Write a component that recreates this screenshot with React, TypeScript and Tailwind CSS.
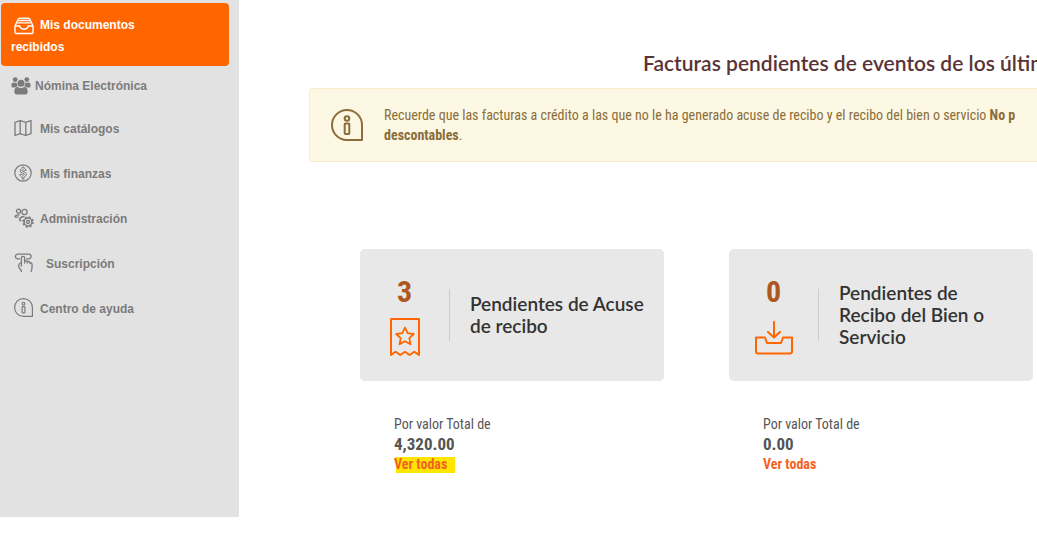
import type { ReactNode } from 'react';

const DocumentsIcon = () => (
  <svg width="20" height="18" viewBox="0 0 20 18" fill="none" stroke="currentColor" strokeWidth="1.4" strokeLinejoin="round">
    <path d="M5 1.2h10M4.2 3.5h11.6M3.2 5.9h13.6" />
    <path d="M4.6 1.2 1 9v6.2c0 .8.5 1.3 1.3 1.3h15.4c.8 0 1.3-.5 1.3-1.3V9l-3.6-7.8" />
    <path d="M1 9h4.8c.4 2 2 3.2 4.2 3.2s3.8-1.2 4.2-3.2H19" />
  </svg>
);

const GroupIcon = () => (
  <svg width="20" height="18" viewBox="0 0 20 18" fill="currentColor">
    <circle cx="4.2" cy="2.6" r="2.4" />
    <circle cx="15.8" cy="2.6" r="2.4" />
    <circle cx="10" cy="6.200" r="3.500" />
    <path d="M.5 9.500V7.600C.5 6.200 1.400 5.400 2.500 5.400c1 .6 2.300.6 3.200.1 0 1.600.4 2.700 1.200 3.700-1.300.1-2.200.6-2.900 1.400H1.800C1 10.600.5 10.200.5 9.500zM19.500 9.500V7.600c0-1.400-.9-2.200-2-2.200-1 .6-2.300.6-3.200.1 0 1.600-.4 2.700-1.200 3.700 1.300.1 2.200.6 2.900 1.400h2.200c.8 0 1.300-.4 1.300-1.100z" />
    <path d="M3.300 15c0-2.900.9-4.900 3.300-4.900 2 1.500 4.800 1.500 6.800 0 2.400 0 3.300 2 3.300 4.900 0 1.500-1 2.400-2.400 2.400H5.700c-1.400 0-2.400-.9-2.400-2.400z" />
  </svg>
);

const MapIcon = () => (
  <svg width="18" height="18" viewBox="0 0 18 18" fill="none" stroke="currentColor" strokeWidth="1.3" strokeLinejoin="round">
    <path d="M1 3.3 6.2 1.5l5.6 1.800L17 1.500v13.200l-5.200 1.800-5.600-1.800L1 16.500zM6.200 1.500v13.200M11.800 3.300v13.200" />
  </svg>
);

const MoneyIcon = () => (
  <svg width="18" height="18" viewBox="0 0 18 18" fill="none" stroke="currentColor" strokeLinejoin="round">
    <circle cx="9" cy="9" r="8.2" strokeWidth="1.2" />
    <path
      d="M8.300 3h1.600v1.200c1.200.3 2 1.100 2.200 2.200h-1.800c-.3-.6-2.300-.8-2.300.3 0 1.200 4.300.7 4.300 3.600 0 1.400-1 2.300-2.400 2.600V15H8.300v-2.100c-1.400-.3-2.300-1.200-2.500-2.500h1.900c.3 1 2.700 1.100 2.700-.1 0-1.400-4.200-.8-4.200-3.500 0-1.300.9-2.200 2.100-2.500z"
      strokeWidth="1"
    />
  </svg>
);

const AdminIcon = () => (
  <svg width="20" height="20" viewBox="0 0 20 20" fill="none" stroke="currentColor" strokeWidth="1.3">
    <circle cx="4.500" cy="3.200" r="2" />
    <circle cx="10.500" cy="4" r="2.600" />
    <path d="M.8 9.200c.4-1.600 1.800-2.600 4.700-2.200M5.500 12.500c0-2.400 1.700-3.900 5-4M.8 9.200h3.800M5.500 12.500h2" />
    <circle cx="14" cy="14" r="3.900" strokeWidth="1.500" />
    <circle cx="14" cy="14" r="1.500" />
    <circle cx="14" cy="14" r="5" strokeWidth="1.500" strokeDasharray="2.100 1.827" />
  </svg>
);

const TouchIcon = () => (
  <svg width="20" height="20" viewBox="0 0 20 20" fill="none" stroke="currentColor" strokeWidth="1.3" strokeLinecap="round" strokeLinejoin="round">
    <path d="M5.500 5.800H3.700a2.300 2.300 0 0 1 0-4.600h11.100a2.300 2.300 0 0 1 0 4.600H12.500" />
    <path d="M7.400 13V4.900a1.600 1.600 0 0 1 3.200 0V10M10.600 8.200c1.200-.9 2.600-.4 2.800.8V10M13.400 8.700c1.300-.6 2.500 0 2.600 1.200v.6M16 9.600c1.200-.2 2 .5 2 1.700v3.200c0 1.500-.3 2.600-1 4M7.400 9.500c-1.700.6-3 2.200-2.700 4.200.2 1.800 2.300 2.300 2.800 4.800" />
  </svg>
);

const InfoIcon = ({ size, stroke }: { size: number; stroke: number }) => (
  <svg width={size} height={size} viewBox="0 0 32 32" fill="none" stroke="currentColor" strokeWidth={stroke} className="shrink-0">
    <path d="M31 31H16A15 15 0 1 1 31 16z" strokeLinejoin="round" />
    <circle cx="16" cy="9.5" r="2.300" />
    <rect x="13.700" y="14.500" width="4.600" height="10.500" rx=".8" />
  </svg>
);

const ReceiptIcon = () => (
  <svg width="30" height="39" viewBox="0 0 30 39" fill="none" stroke="#ff6600" strokeWidth="2" strokeLinejoin="round">
    <path d="M1 37V1h28v36l-4.700-3.300-4.700 3.300-4.600-3.300-4.700 3.300-4.700-3.300z" />
    <path d="m15 9.500 2.600 5.700 6.200.8-4.500 4.200 1.200 6.100-5.500-3.100-5.500 3.100 1.200-6.100L6.200 16l6.200-.8z" strokeWidth="1.800" />
  </svg>
);

const InboxIcon = () => (
  <svg width="38" height="39" viewBox="0 0 38 39" fill="none" stroke="#ff6600" strokeWidth="2" strokeLinejoin="round" strokeLinecap="round">
    <path d="M19 4v15M13 14l6 5.500 6-5.500" />
    <path d="M1 19.500h9l2 5.500h14l2-5.500h9V33.500a2 2 0 0 1-2 2H3a2 2 0 0 1-2-2z" />
  </svg>
);

const menu = [
  { label: 'Mis catálogos', icon: <MapIcon />, slot: 'w-[26px]' },
  { label: 'Mis finanzas', icon: <MoneyIcon />, slot: 'w-[26px]' },
  { label: 'Administración', icon: <AdminIcon />, slot: 'w-[26px]' },
  { label: 'Suscripción', icon: <TouchIcon />, slot: 'w-8' },
  { label: 'Centro de ayuda', icon: <InfoIcon size={19} stroke={2} />, slot: 'w-[26px]' },
];

const Sidebar = () => (
  <aside className="w-[239px] shrink-0 bg-[#e2e2e2] pt-[3px] pb-[186px] font-['Liberation_Sans',sans-serif] text-xs font-bold text-[#7b7b7b]">
    <nav>
      <a href="#documentos" className="mr-2.5 ml-px block rounded bg-[#ff6600] px-2.5 pt-[11px] pb-2 leading-[22px] text-white">
        <span className="mr-1.5 ml-[3px] inline-block align-middle">
          <DocumentsIcon />
        </span>
        Mis documentos
        <br />
        recibidos
      </a>
      <a href="#nomina" className="flex h-10 items-center gap-1 pl-[11px]">
        <GroupIcon />
        Nómina Electrónica
      </a>
      {menu.map((item) => (
        <a key={item.label} href="#menu" className="flex h-[45px] items-center pl-3.5">
          <span className={`shrink-0 pb-0.5 ${item.slot}`}>{item.icon}</span>
          {item.label}
        </a>
      ))}
    </nav>
  </aside>
);

interface SummaryProps {
  count: number;
  title: string;
  total: string;
  icon: ReactNode;
  marked?: boolean;
}

const Summary = ({ count, title, total, icon, marked }: SummaryProps) => (
  <section className="w-[304px] shrink-0">
    <div className="flex h-[132px] items-center rounded-[5px] bg-[#e8e8e8]">
      <div className="flex w-[89px] flex-col items-center gap-2.5 pt-0.5">
        <span className="text-[30px] leading-8 font-bold text-[#ae5720]">{count}</span>
        {icon}
      </div>
      <div className="h-[52px] w-px bg-[#cccccc]" />
      <h2 className="flex-1 pr-4 pl-5 font-['Lato',sans-serif] text-[19px] leading-[22px] font-semibold text-[#333333]">{title}</h2>
    </div>
    <div className="mt-[33px] pl-[34px] text-sm leading-5 text-[#555555]">
      <p>Por valor Total de</p>
      <p className="text-[17px] leading-5 font-bold">{total}</p>
      <a
        href="#todas"
        className={`relative isolate block w-fit font-bold text-[#f26322] ${
          marked ? 'before:absolute before:top-[3px] before:-right-2 before:bottom-px before:left-0.5 before:-z-10 before:bg-[#ffe600]' : ''
        }`}
      >
        Ver todas
      </a>
    </div>
  </section>
);

export default function App() {
  return (
    <div className="flex items-start overflow-hidden bg-white font-['Roboto_Condensed','Roboto',sans-serif]">
      <Sidebar />
      <main className="min-w-0 flex-1 overflow-hidden pt-[47px] pl-[70px]">
        <h1 className="pl-[334px] font-['Lato',sans-serif] text-[21px] leading-8 font-semibold whitespace-nowrap text-[#5a3335]">
          Facturas pendientes de eventos de los últim
        </h1>

        {/* WARNING */}
        <div className="mt-[9px] flex items-center gap-[21px] rounded-l border border-r-0 border-[#faebcc] bg-[#fcf8e3] py-4 pl-[21px] text-sm leading-5 whitespace-nowrap text-[#8a6d3b]">
          <InfoIcon size={32} stroke={2} />
          <p>
            Recuerde que las facturas a crédito a las que no le ha generado acuse de recibo y el recibo del bien o servicio{' '}
            <strong>
              No p
              <br />
              descontables
            </strong>
            .
          </p>
        </div>

        {/* SUMMARY CARDS */}
        <div className="mt-[87px] flex gap-[65px] pl-[51px]">
          <Summary count={3} title="Pendientes de Acuse de recibo" total="4,320.00" icon={<ReceiptIcon />} marked />
          <Summary count={0} title="Pendientes de Recibo del Bien o Servicio" total="0.00" icon={<InboxIcon />} />
        </div>
      </main>
    </div>
  );
}
